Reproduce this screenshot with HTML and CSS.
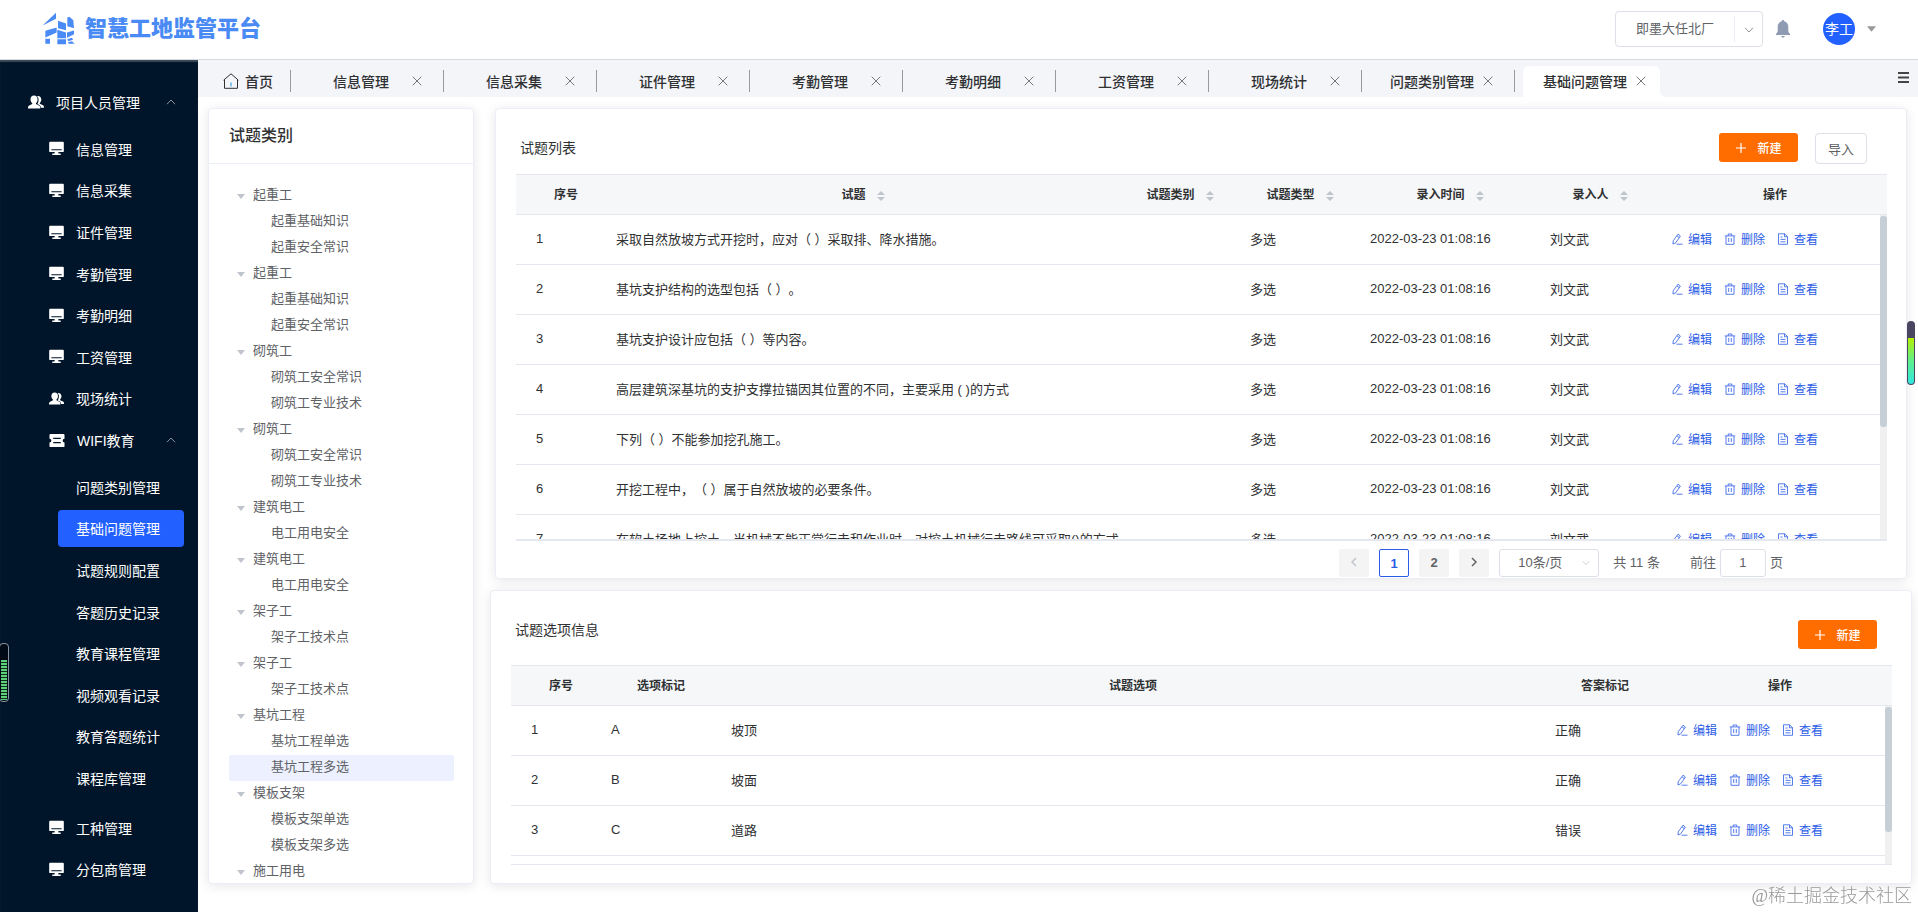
FILE: index.html
```html
<!doctype html>
<html lang="zh-CN">
  <head>
    <meta charset="utf-8">
    <meta name="viewport" content="width=device-width, initial-scale=1">
    <title>智慧工地监管平台</title>
    <link rel="stylesheet" href="styles.css">
  </head>
  <body>

    <svg class="sprite" aria-hidden="true">
      <symbol id="i-users" viewBox="0 0 16 14">
        <path d="M10 1c2 0 3.300 1.500 3.300 3.600 0 1.400-.6 2.700-1.500 3.400v.8l3.200 1.500c.6.300 1 .9 1 1.700v.8h-3.200c0-1.500-.6-2.400-1.800-3l-1.600-.8C10.200 7.800 10.600 6.200 10.600 4.700 10.600 3.200 10 2 9 1.200z"/>
        <path d="M6 .5c2.200 0 3.600 1.600 3.600 3.900 0 1.500-.6 2.800-1.600 3.600v.9l3 1.500c.8.400 1.200 1 1.200 1.900v1.200H0v-1.200c0-.9.4-1.500 1.200-1.900l3-1.500V8C3.100 7.200 2.500 5.900 2.500 4.400 2.500 2.100 3.900.5 6 .5z"/>
      </symbol>
      <symbol id="i-screen" viewBox="0 0 16 16">
        <path fill-rule="evenodd" d="M1.200 .8h13.600c.6 0 1 .4 1 1v9c0 .6-.4 1-1 1H10v1.400h2.500V15h-9v-1.800H6v-1.400H1.200c-.6 0-1-.4-1-1v-9c0-.6.4-1 1-1zM2.500 8.800V9.800h11V8.800z"/>
      </symbol>
      <symbol id="i-ticket" viewBox="0 0 16 16">
        <path fill-rule="evenodd" d="M1 1h14c.6 0 1 .4 1 1v4a2 2 0 0 0 0 4v4c0 .6-.4 1-1 1H1c-.6 0-1-.4-1-1v-4a2 2 0 0 0 0-4V2c0-.6.4-1 1-1zM4 5v1.500h8V5zM4 9.500V11h8V9.500z"/>
      </symbol>
      <symbol id="i-up" viewBox="0 0 10 6"><path d="M1 5.200 5 1l4 4.200" fill="none" stroke="currentColor"/></symbol>
      <symbol id="i-down" viewBox="0 0 10 6"><path d="M1 .8 5 5l4-4.200" fill="none" stroke="currentColor"/></symbol>
      <symbol id="i-left" viewBox="0 0 6 10"><path d="M5 1 1 5l4 4" fill="none" stroke="currentColor" stroke-width="1.500"/></symbol>
      <symbol id="i-right" viewBox="0 0 6 10"><path d="M1 1l4 4-4 4" fill="none" stroke="currentColor" stroke-width="1.500"/></symbol>
      <symbol id="i-caret" viewBox="0 0 10 6"><path d="M0 0h10L5 6z"/></symbol>
      <symbol id="i-close" viewBox="0 0 10 10"><path d="M.7.7l8.600 8.600M9.300.7.7 9.300" fill="none" stroke="currentColor"/></symbol>
      <symbol id="i-plus" viewBox="0 0 12 12"><path d="M6 1v10M1 6h10" fill="none" stroke="currentColor" stroke-width="1.200"/></symbol>
      <symbol id="i-sort" viewBox="0 0 8 12"><path d="M4 1l4 4H0zM4 11 0 7h8z"/></symbol>
      <symbol id="i-edit" viewBox="0 0 12 12"><path d="M7 1.200 9.400 3 4.700 9.800 2 11l.2-3.200zM6 2.900l2.300 1.700M5.500 11.200h6" fill="none" stroke="currentColor" stroke-width=".8"/></symbol>
      <symbol id="i-delete" viewBox="0 0 12 12"><path d="M.8 2.900h10.400M4.200 2.700V1h3.600v1.700M2 3v8.300h8V3M4.700 5v4M7.300 5v4" fill="none" stroke="currentColor" stroke-width=".8"/></symbol>
      <symbol id="i-view" viewBox="0 0 12 12"><path d="M1.500.8h6L10.500 3.600v7.700h-9zM7.500.8v3h3M3.500 4h2M3.500 6.400h5M3.500 8.800h5" fill="none" stroke="currentColor" stroke-width=".8"/></symbol>
    </svg>

    <header class="header">
      <div class="logo">
        <svg class="logo-mark" viewBox="0 0 105 98">
          <path d="M8 34 42 2v18L2 40zM48 26l24 8v20l-24-6zM76 16l6-2 12 10 2 24-20-6zM10 56l34-10v15L10 76zM46 53l26 8v17H46zM75 61l21-6v11l-21 11zM10 80h14v15H10zM46 81h26v15H46zM76 81l14-4 3 6-14 4zM78 90l12-3 8 8H80z"/>
        </svg>
        <h1 class="logo-text">智慧工地监管平台</h1>
      </div>
      <div class="header-right">
        <div class="site-select">
          <select aria-label="项目"><option>即墨大任北厂</option></select>
          <span class="site-arrow"><svg width="10" height="6"><use href="#i-down"/></svg></span>
        </div>
        <button class="bell" type="button" aria-label="消息">
          <svg width="16" height="18" viewBox="0 0 16 18"><path d="M8 0c.8 0 1.200.5 1.200 1.200C11.700 1.800 13.300 4 13.300 6.700V11c0 1.200.8 2 1.700 2.700V15H1v-1.300C1.900 13 2.700 12.200 2.700 11V6.700C2.700 4 4.300 1.800 6.800 1.200 6.800.5 7.200 0 8 0zM5.800 16h4.400L8 18z"/></svg>
        </button>
        <button class="user" type="button">
          <span class="avatar">李工</span>
          <svg width="9" height="6"><use href="#i-caret"/></svg>
        </button>
      </div>
    </header>

    <div class="layout">
      <nav class="sidebar">
        <a class="menu-title" href="#">
          <svg width="16" height="14"><use href="#i-users"/></svg>
          项目人员管理
          <svg class="fold" width="10" height="6"><use href="#i-up"/></svg>
        </a>
        <ul class="menu menu-main">
          <li><a href="#"><svg width="15" height="15"><use href="#i-screen"/></svg>信息管理</a></li>
          <li><a href="#"><svg width="15" height="15"><use href="#i-screen"/></svg>信息采集</a></li>
          <li><a href="#"><svg width="15" height="15"><use href="#i-screen"/></svg>证件管理</a></li>
          <li><a href="#"><svg width="15" height="15"><use href="#i-screen"/></svg>考勤管理</a></li>
          <li><a href="#"><svg width="15" height="15"><use href="#i-screen"/></svg>考勤明细</a></li>
          <li><a href="#"><svg width="15" height="15"><use href="#i-screen"/></svg>工资管理</a></li>
          <li><a href="#"><svg width="15" height="15"><use href="#i-users"/></svg>现场统计</a></li>
          <li><a href="#"><svg width="16" height="15"><use href="#i-ticket"/></svg>WIFI教育<svg class="fold" width="10" height="6"><use href="#i-up"/></svg></a></li>
        </ul>
        <ul class="menu menu-sub">
          <li><a href="#">问题类别管理</a></li>
          <li><a class="active" href="#">基础问题管理</a></li>
          <li><a href="#">试题规则配置</a></li>
          <li><a href="#">答题历史记录</a></li>
          <li><a href="#">教育课程管理</a></li>
          <li><a href="#">视频观看记录</a></li>
          <li><a href="#">教育答题统计</a></li>
          <li><a href="#">课程库管理</a></li>
        </ul>
        <ul class="menu menu-rest">
          <li><a href="#"><svg width="15" height="15"><use href="#i-screen"/></svg>工种管理</a></li>
          <li><a href="#"><svg width="15" height="15"><use href="#i-screen"/></svg>分包商管理</a></li>
        </ul>
      </nav>

      <div class="page">
        <div class="tabs">
          <a class="tab-home" href="#">
            <svg width="16" height="16" viewBox="0 0 16 16"><path d="M.6 7.200 8 .8l7.400 6.400M1.500 6.500v8.800h13V6.500" fill="none" stroke="#303133"/><path d="M8 9.500v4" stroke="#1296db"/></svg>
            首页
          </a>
          <ul class="tab-list" id="tabs"></ul>
          <button class="tab-more" type="button" aria-label="更多">
            <svg width="11" height="11" viewBox="0 0 11 11"><path d="M0 1h11M0 5.500h11M0 10h11" stroke="#444" stroke-width="2"/></svg>
          </button>
        </div>

        <main class="content">
          <section class="card tree-card">
            <h2 class="tree-title">试题类别</h2>
            <ul class="tree" id="tree"></ul>
          </section>

          <div class="right">
            <section class="card question-card">
              <div class="card-head">
                <h3>试题列表</h3>
                <button class="btn-new" type="button"><svg width="12" height="12"><use href="#i-plus"/></svg>新建</button>
                <button class="btn-import" type="button">导入</button>
              </div>
              <table class="table">
                <colgroup><col class="w80"><col><col class="w120"><col class="w120"><col class="w180"><col class="w120"><col class="w230"><col class="w7"></colgroup>
                <thead>
                  <tr>
                    <th>序号</th>
                    <th>试题<svg class="sort"><use href="#i-sort"/></svg></th>
                    <th>试题类别<svg class="sort"><use href="#i-sort"/></svg></th>
                    <th>试题类型<svg class="sort"><use href="#i-sort"/></svg></th>
                    <th>录入时间<svg class="sort"><use href="#i-sort"/></svg></th>
                    <th>录入人<svg class="sort"><use href="#i-sort"/></svg></th>
                    <th>操作</th>
                    <td class="gutter"></td>
                  </tr>
                </thead>
              </table>
              <div class="scroll">
                <table class="table">
                  <colgroup><col class="w80"><col><col class="w120"><col class="w120"><col class="w180"><col class="w120"><col class="w230"></colgroup>
                  <tbody id="questions"></tbody>
                </table>
                <div class="bar"><i class="thumb thumb-question"></i></div>
              </div>
              <div class="pager">
                <button class="off" type="button" aria-label="上一页"><svg width="6" height="10"><use href="#i-left"/></svg></button>
                <button class="on" type="button">1</button>
                <button type="button">2</button>
                <button type="button" aria-label="下一页"><svg width="6" height="10"><use href="#i-right"/></svg></button>
                <div class="page-size">
                  <select aria-label="每页条数"><option>10条/页</option></select>
                  <svg width="8" height="6"><use href="#i-down"/></svg>
                </div>
                <span class="total">共 11 条</span>
                <label class="jump">前往<input type="text" value="1">页</label>
              </div>
            </section>

            <section class="card option-card">
              <div class="card-head">
                <h3>试题选项信息</h3>
                <button class="btn-new" type="button"><svg width="12" height="12"><use href="#i-plus"/></svg>新建</button>
              </div>
              <table class="table">
                <colgroup><col class="w80"><col class="w120"><col><col class="w120"><col class="w230"><col class="w7"></colgroup>
                <thead>
                  <tr>
                    <th>序号</th>
                    <th>选项标记</th>
                    <th>试题选项</th>
                    <th>答案标记</th>
                    <th>操作</th>
                    <td class="gutter"></td>
                  </tr>
                </thead>
              </table>
              <div class="scroll">
                <table class="table">
                  <colgroup><col class="w80"><col class="w120"><col><col class="w120"><col class="w230"></colgroup>
                  <tbody id="options"></tbody>
                </table>
                <div class="bar"><i class="thumb thumb-option"></i></div>
              </div>
            </section>
          </div>
        </main>
      </div>
    </div>

    <div class="meter meter-left"><i></i></div>
    <div class="meter meter-right"><i></i></div>
    <div class="watermark">@稀土掘金技术社区</div>

    <script src="script.js"></script>
  </body>
</html>
```

FILE: styles.css
```css
* {
  box-sizing: border-box;
  margin: 0;
  padding: 0;
}

body {
  display: flex;
  flex-direction: column;
  height: 100vh;
  overflow: hidden;
  background: #fff;
  color: #303133;
  font-family: "Liberation Sans", "Noto Sans CJK SC", sans-serif;
  font-size: 13px;
  text-spacing-trim: space-all;
}

ul {
  list-style: none;
}

a {
  color: inherit;
  text-decoration: none;
}

button, select, input {
  appearance: none;
  border: 0;
  background: none;
  color: inherit;
  font: inherit;
}

svg {
  flex: none;
  fill: currentColor;
}

.sprite {
  position: absolute;
  width: 0;
  height: 0;
}

/* header */
.header {
  display: flex;
  justify-content: space-between;
  flex: none;
  height: 60px;
  padding: 0 42px;
  border-bottom: 1px solid #d8dbe0;
}

.logo {
  display: flex;
  align-items: center;
  gap: 8px;
  padding-bottom: 2px;
  color: #4a8af4;
}

.logo-mark {
  width: 35px;
  height: 33px;
}

.logo-text {
  font-size: 22px;
  font-weight: 900;
  line-height: 30px;
}

.header-right {
  display: flex;
  align-items: center;
  padding-bottom: 2px;
}

.site-select {
  display: flex;
  align-items: center;
  width: 148px;
  height: 36px;
  border: 1px solid #dcdfe6;
  border-radius: 4px;
  color: #606266;
}

.site-select select {
  flex: 1;
  padding-left: 20px;
}

.site-arrow {
  width: 28px;
  height: 26px;
  padding-left: 9px;
  border-left: 1px solid #ebeef5;
  line-height: 26px;
  color: #909399;
}

.bell {
  margin-left: 12px;
  height: 18px;
  color: #8f9bb3;
}

.user {
  display: flex;
  align-items: center;
  gap: 12px;
  margin-left: 32px;
  color: #999;
}

.avatar {
  width: 32px;
  height: 32px;
  border-radius: 50%;
  background: #2260ff;
  color: #fff;
  font-size: 14px;
  line-height: 32px;
  text-align: center;
}

.layout {
  display: flex;
  flex: 1;
  min-height: 0;
}

/* sidebar */
.sidebar {
  display: flex;
  flex-direction: column;
  flex: none;
  width: 198px;
  padding-bottom: 22px;
  background: #001529;
  box-shadow: inset 0 2px 1px #3d4a58;
  color: #fff;
  font-size: 14px;
}

.menu-title {
  display: flex;
  align-items: center;
  gap: 12px;
  height: 68px;
  padding: 16px 22px 0 28px;
}

.fold {
  margin-left: auto;
  color: #8a94a0;
}

.menu {
  display: flex;
  flex-direction: column;
}

.menu li {
  display: flex;
  align-items: center;
  flex: 1;
}

.menu a {
  display: flex;
  align-items: center;
  gap: 12px;
  flex: 1;
  padding: 0 22px 0 49px;
}

.menu-main {
  flex: 8;
}

.menu-sub {
  flex: 8;
  margin: 5px 0 8px;
}

.menu-rest {
  flex: 2;
}

.menu .fold {
  margin-left: auto;
}

.menu-sub a {
  height: 37px;
  margin: 0 14px 0 58px;
  padding: 0 18px;
  border-radius: 4px;
}

.menu-sub .active {
  background: #2260ff;
}

/* tabs */
.page {
  display: flex;
  flex-direction: column;
  flex: 1;
  min-width: 0;
}

.tabs {
  display: flex;
  flex: none;
  height: 37px;
  padding-right: 9px;
  background: #f3f5f9;
  font-size: 14px;
  font-weight: 500;
}

.tab-home {
  display: flex;
  align-items: center;
  gap: 6px;
  width: 92px;
  padding: 4px 0 0 25px;
}

.tab-list {
  display: flex;
  flex: 1;
}

.tab {
  display: flex;
  align-items: flex-end;
  width: 153px;
}

.tab::before {
  content: "";
  width: 1px;
  height: 22px;
  margin: 0 8px 5px 0;
  background: #999;
}

.tab-box {
  position: relative;
  display: flex;
  align-items: center;
  width: 137px;
  height: 31px;
  padding: 0 0 2px 20px;
  border-radius: 6px 6px 0 0;
}

.tab-box a {
  width: 84px;
  text-align: center;
}

.tab-box button {
  width: 14px;
  height: 10px;
  margin-left: 7px;
  line-height: 0;
  color: #777;
}

.tab-box.active {
  background: #fff;
}

.tab-box.active::after {
  content: "";
  position: absolute;
  left: 100%;
  bottom: 0;
  width: 6px;
  height: 6px;
  background: radial-gradient(circle at 100% 0, transparent 6px, #fff 6px);
}

.tab-more {
  height: 11px;
  margin-top: 12px;
  line-height: 0;
}

/* content */
.content {
  display: flex;
  flex: 1;
  gap: 16px;
  min-height: 0;
  padding: 11px 6px 28px 10px;
}

.card {
  border: 1px solid #ebeef5;
  border-radius: 4px;
  background: #fff;
  box-shadow: 0 2px 12px rgba(0, 0, 0, .1);
}

.tree-card {
  flex: none;
  width: 266px;
  overflow: hidden;
}

.tree-title {
  height: 55px;
  padding-left: 20px;
  border-bottom: 1px solid #ebeef5;
  font-size: 16px;
  font-weight: 500;
  line-height: 54px;
}

.tree {
  padding: 19px 19px 0 20px;
  color: #606266;
  line-height: 24px;
}

.tree li {
  display: flex;
  gap: 8px;
  height: 26px;
  padding-left: 8px;
  border-radius: 2px;
}

.tree svg {
  margin-top: 11px;
  color: #c0c4cc;
}

.tree .leaf {
  padding-left: 42px;
}

.tree .current {
  background: #edf1ff;
}

.right {
  display: flex;
  flex-direction: column;
  flex: 1;
  gap: 11px;
  min-width: 0;
}

.question-card {
  display: flex;
  flex-direction: column;
  flex: 1;
  min-height: 0;
  margin: 0 5px;
  padding: 0 19px 0 20px;
}

.option-card {
  padding: 0 19px 18px 20px;
}

.card-head {
  display: flex;
  align-items: flex-start;
  flex: none;
  height: 65px;
  padding: 24px 20px 0 4px;
}

.card-head h3 {
  flex: 1;
  font-size: 14px;
  font-weight: 400;
  line-height: 31px;
}

.option-card .card-head {
  height: 74px;
  padding: 29px 15px 0 4px;
}

.option-card h3 {
  line-height: 20px;
}

.btn-new {
  display: flex;
  align-items: center;
  justify-content: center;
  gap: 10px;
  width: 79px;
  height: 29px;
  border-radius: 3px;
  background: #ff6c00;
  color: #fff;
  font-size: 12px;
  font-weight: 500;
}

.btn-import {
  width: 52px;
  height: 31px;
  margin-left: 17px;
  border: 1px solid #dcdfe6;
  border-radius: 4px;
  color: #606266;
}

/* tables */
.table {
  width: 100%;
  border-collapse: separate;
  border-spacing: 0;
  table-layout: fixed;
}

.w7 { width: 7px; }
.w80 { width: 80px; }
.w120 { width: 120px; }
.w180 { width: 180px; }
.w230 { width: 230px; }

.table th, .table .gutter {
  height: 41px;
  border: solid #e4e8ec;
  border-width: 1px 0;
  background: #f5f7f9;
}

.table th {
  padding: 0 0 2px 20px;
  font-size: 12px;
  font-weight: 700;
  white-space: nowrap;
}

.sort {
  width: 8px;
  height: 12px;
  margin-left: 11px;
  vertical-align: -3px;
  color: #c0c4cc;
}

.scroll {
  position: relative;
  flex: 1;
  min-height: 0;
  padding-right: 7px;
  border-bottom: 2px solid #e4e7ed;
  overflow: hidden;
}

.option-card .scroll {
  height: 159px;
  border-bottom-width: 1px;
}

.scroll td {
  height: 50px;
  padding: 0 0 2px 20px;
  border-bottom: 1px solid #e4e7ed;
  white-space: nowrap;
}

.ops {
  display: flex;
  gap: 12px;
  padding-left: 1px;
  color: #2b5ce6;
  font-size: 12px;
}

.ops a {
  display: flex;
  align-items: center;
  gap: 5px;
}

.bar {
  position: absolute;
  top: 0;
  right: 0;
  bottom: 0;
  width: 7px;
  background: #f0f0f0;
}

.thumb {
  display: block;
  margin-top: 1px;
  border-radius: 3px;
  background: #c6ced6;
}

.thumb-question {
  height: 65%;
}

.thumb-option {
  height: 79%;
}

/* pagination */
.pager {
  display: flex;
  justify-content: flex-end;
  gap: 10px;
  flex: none;
  height: 37px;
  padding: 8px 104px 1px 0;
  color: #606266;
  line-height: 28px;
}

.pager button {
  width: 30px;
  background: #f4f4f5;
  font-weight: 700;
  border-radius: 2px;
}

.pager .off {
  color: #c0c4cc;
}

.pager .on {
  border: 1px solid #2b5ce6;
  background: #fff;
  color: #2b5ce6;
}

.page-size {
  display: flex;
  align-items: center;
  width: 100px;
  padding-right: 8px;
  border: 1px solid #dcdfe6;
  border-radius: 3px;
}

.page-size select {
  flex: 1;
  padding-left: 18px;
}

.page-size svg {
  color: #c0c4cc;
}

.total {
  margin: 0 20px 0 4px;
}

.jump {
  display: flex;
  gap: 4px;
}

.jump input {
  width: 46px;
  border: 1px solid #dcdfe6;
  border-radius: 3px;
  text-align: center;
}

/* floating meters */
.meter {
  position: fixed;
  display: flex;
  align-items: flex-end;
}

.meter i {
  width: 100%;
}

.meter-left {
  left: -1px;
  top: 643px;
  width: 10px;
  height: 59px;
  padding: 1px;
  border: 1px solid #8a949e;
  border-radius: 4px;
  background: #000a16;
}

.meter-left i {
  height: 40px;
  background: repeating-linear-gradient(#5fd07a 0 2px, #0c2a20 2px 3px);
}

.meter-right {
  right: 3px;
  top: 321px;
  width: 8px;
  height: 64px;
  padding: 1px;
  border-radius: 4px;
  background: #4a4560;
}

.meter-right i {
  height: 46px;
  border-radius: 0 0 3px 3px;
  background: linear-gradient(#b4f000, #5ff08c 50%, #30e8e0);
}

.watermark {
  position: fixed;
  right: 6px;
  bottom: 2px;
  color: #999;
  font-family: "Liberation Serif", "Noto Sans CJK SC", serif;
  font-size: 18px;
  font-weight: 300;
  line-height: 28px;
}
```

FILE: script.js
```js
const icon = (name, w, h) => `<svg width="${w}" height="${h}"><use href="#i-${name}"/></svg>`;

// tabs
const tabs = ['信息管理', '信息采集', '证件管理', '考勤管理', '考勤明细', '工资管理', '现场统计', '问题类别管理', '基础问题管理'];
document.getElementById('tabs').innerHTML = tabs.map((name) => `
  <li class="tab">
    <div class="tab-box${name === '基础问题管理' ? ' active' : ''}">
      <a href="#">${name}</a>
      <button type="button" aria-label="关闭">${icon('close', 10, 10)}</button>
    </div>
  </li>`).join('');

// category tree
const tree = [
  ['起重工', ['起重基础知识', '起重安全常识']],
  ['起重工', ['起重基础知识', '起重安全常识']],
  ['砌筑工', ['砌筑工安全常识', '砌筑工专业技术']],
  ['砌筑工', ['砌筑工安全常识', '砌筑工专业技术']],
  ['建筑电工', ['电工用电安全']],
  ['建筑电工', ['电工用电安全']],
  ['架子工', ['架子工技术点']],
  ['架子工', ['架子工技术点']],
  ['基坑工程', ['基坑工程单选', '基坑工程多选']],
  ['模板支架', ['模板支架单选', '模板支架多选']],
  ['施工用电', []]
];
document.getElementById('tree').innerHTML = tree.map(([name, leaves]) =>
  `<li>${icon('caret', 8, 5)}${name}</li>` +
  leaves.map((leaf) => `<li class="leaf${leaf === '基坑工程多选' ? ' current' : ''}">${leaf}</li>`).join('')
).join('');

// tables
const ops = `<td><div class="ops">
  <a href="#">${icon('edit', 12, 12)}编辑</a>
  <a href="#">${icon('delete', 12, 12)}删除</a>
  <a href="#">${icon('view', 12, 12)}查看</a>
</div></td>`;

function fill(id, rows) {
  document.getElementById(id).innerHTML = rows.map((row, n) =>
    `<tr><td>${n + 1}</td>${row.map((cell) => `<td>${cell}</td>`).join('')}${ops}</tr>`
  ).join('');
}

const questions = [
  '采取自然放坡方式开挖时，应对（ ）采取排、降水措施。',
  '基坑支护结构的选型包括（ ）。',
  '基坑支护设计应包括（ ）等内容。',
  '高层建筑深基坑的支护支撑拉锚因其位置的不同，主要采用 ( )的方式',
  '下列（ ）不能参加挖孔施工。',
  '开挖工程中，（ ）属于自然放坡的必要条件。',
  '在软土场地上挖土，当机械不能正常行走和作业时，对挖土机械行走路线可采取()的方式'
];
fill('questions', questions.map((q) => [q, '', '多选', '2022-03-23 01:08:16', '刘文武']));

fill('options', [
  ['A', '坡顶', '正确'],
  ['B', '坡面', '正确'],
  ['C', '道路', '错误']
]);
```
